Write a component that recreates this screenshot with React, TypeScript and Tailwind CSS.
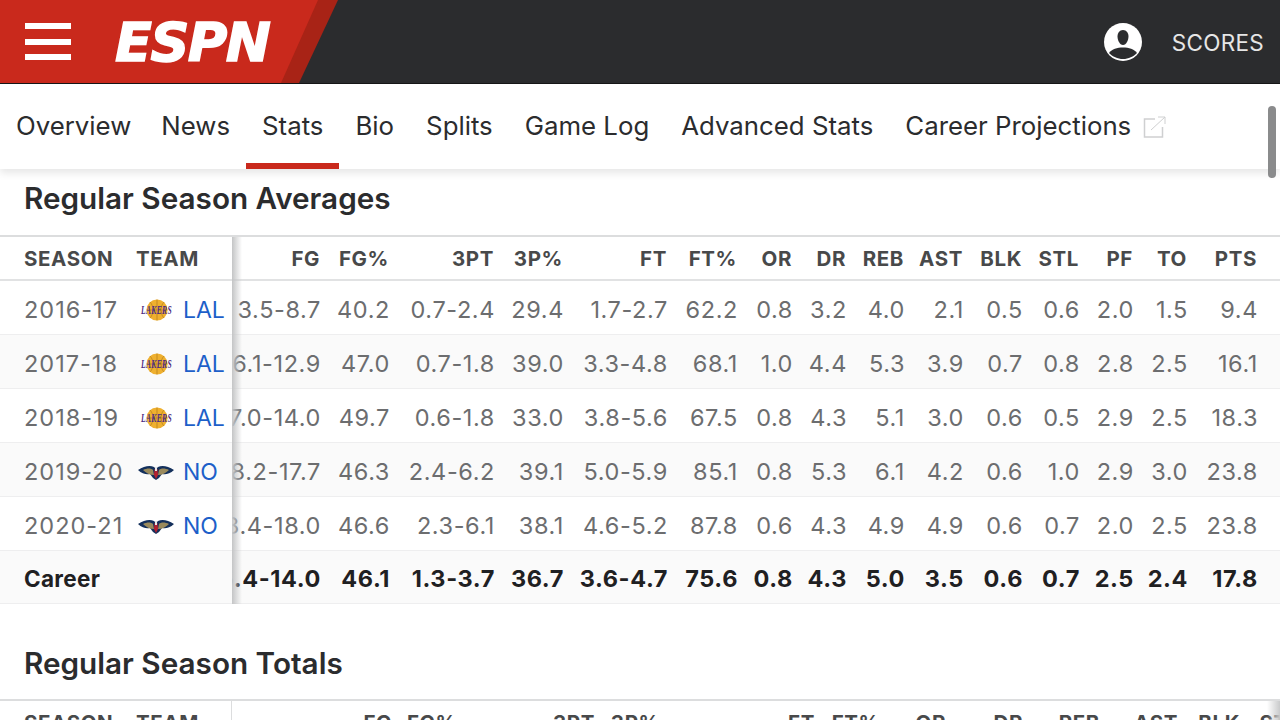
const font = "font-['Inter','Liberation_Sans',sans-serif]";

const tabs = ["Overview", "News", "Stats", "Bio", "Splits", "Game Log", "Advanced Stats", "Career Projections"];
const heads = ["FG", "FG%", "3PT", "3P%", "FT", "FT%", "OR", "DR", "REB", "AST", "BLK", "STL", "PF", "TO", "PTS"];
const widths = [118, 69, 105, 69, 104, 70, 55, 54, 58, 59, 59, 57, 54, 54, 70];
const widthsB = [190, 65, 138, 65, 155, 65, 66, 77, 77, 78, 62, 60, 54, 54, 70];

const rows = [
  { season: "2016-17", team: "LAL", v: ["3.5-8.7", "40.2", "0.7-2.4", "29.4", "1.7-2.7", "62.2", "0.8", "3.2", "4.0", "2.1", "0.5", "0.6", "2.0", "1.5", "9.4"] },
  { season: "2017-18", team: "LAL", v: ["6.1-12.9", "47.0", "0.7-1.8", "39.0", "3.3-4.8", "68.1", "1.0", "4.4", "5.3", "3.9", "0.7", "0.8", "2.8", "2.5", "16.1"] },
  { season: "2018-19", team: "LAL", v: ["7.0-14.0", "49.7", "0.6-1.8", "33.0", "3.8-5.6", "67.5", "0.8", "4.3", "5.1", "3.0", "0.6", "0.5", "2.9", "2.5", "18.3"] },
  { season: "2019-20", team: "NO", v: ["8.2-17.7", "46.3", "2.4-6.2", "39.1", "5.0-5.9", "85.1", "0.8", "5.3", "6.1", "4.2", "0.6", "1.0", "2.9", "3.0", "23.8"] },
  { season: "2020-21", team: "NO", v: ["8.4-18.0", "46.6", "2.3-6.1", "38.1", "4.6-5.2", "87.8", "0.6", "4.3", "4.9", "4.9", "0.6", "0.7", "2.0", "2.5", "23.8"] },
];
const career = ["5.4-14.0", "46.1", "1.3-3.7", "36.7", "3.6-4.7", "75.6", "0.8", "4.3", "5.0", "3.5", "0.6", "0.7", "2.5", "2.4", "17.8"];

function Lakers() {
  return (
    <svg width="34" height="24" viewBox="0 0 34 24" className="shrink-0 ml-[3px]">
      <circle cx="17" cy="12" r="10.500" fill="#efb02f" />
      <path d="M17 1.500v21M6.500 12h21M10 4c4 4 4 12 0 16M24 4c-4 4-4 12 0 16" stroke="#b27c1b" strokeWidth="0.7" fill="none" />
      <text x="1" y="16" fontFamily="Liberation Serif" fontStyle="italic" fontWeight="700" fontSize="11.500" fill="#4b2a84" textLength="31" lengthAdjust="spacingAndGlyphs">LAKERS</text>
    </svg>
  );
}

function Pelicans() {
  return (
    <svg width="36" height="16" viewBox="0 0 36 16" className="shrink-0 ml-[1px]">
      <path d="M0 6C6 2 12 1 16 3L18 5l2-2c4-2 10-1 16 3-4 4-9 5-12 4l-3 4-3 2-3-2-3-4C9 11 4 10 0 6z" fill="#14305c" />
      <path d="M5 6c4-2 8-2 10 0l1 5c-4 0-8-2-11-5zM31 6c-4-2-8-2-10 0l-1 5c4 0 8-2 11-5z" fill="#9a8a5c" />
      <path d="M16.500 5h3l.5 6-2 4-2-4z" fill="#b5202f" />
      <path d="M17 3h2v4h-2z" fill="#e8e8e8" />
    </svg>
  );
}

function Table({ rowsVisible, second }: { rowsVisible: boolean; second?: boolean }) {
  const cols = second ? widthsB : widths;
  const headText = "text-[#48494a] font-bold text-[20.5px] tracking-[0.6px] pt-[2px]";
  const bodyText = "text-[23.5px] tracking-[0.6px] pt-[5px]";
  return (
    <div className={`flex border-t-2 border-[#dcddde] ${font}`}>
      <div className={`w-[232px] shrink-0 z-10 ${second ? "border-r border-[#dcddde]" : ""}`}>
        <div className={`flex items-center h-[44px] pl-6 ${headText} border-b-2 border-[#e1e2e3]`}>
          <span className="w-[112px]">SEASON</span>
          <span>TEAM</span>
        </div>
        {rowsVisible &&
          rows.map((r, i) => (
            <div key={r.season} className={`flex items-center h-[54px] pl-6 border-b border-[#eeeeef] ${bodyText} ${i % 2 ? "bg-[#fafafa]" : "bg-white"}`}>
              <span className="w-[113px] text-[#6c6d6f] tracking-[1px]">{r.season}</span>
              <span className="flex items-center w-[46px] shrink-0">{r.team === "LAL" ? <Lakers /> : <Pelicans />}</span>
              <span className="text-[23px] tracking-normal text-[#1d5fc9]">{r.team}</span>
            </div>
          ))}
        {rowsVisible && (
          <div className="flex items-center h-[53px] pl-6 pt-[4px] bg-[#fafafa] border-b border-[#eeeeef] text-[22.5px] font-bold text-[#1f2022] tracking-[0.3px]">Career</div>
        )}
      </div>
      <div className="relative flex-1 overflow-hidden">
        {!second && <div className="absolute left-0 top-0 bottom-0 w-[10px] bg-gradient-to-r from-[#c4c5c6] to-transparent z-10" />}
        {second && <div className="absolute right-0 top-0 bottom-0 w-[13px] bg-gradient-to-l from-[#c9cacb] to-transparent z-10" />}
        <div className="-ml-[30px] w-[1200px]">
          <div className={`flex items-center h-[44px] ${headText} border-b-2 border-[#e1e2e3]`}>
            {heads.map((h, i) => (
              <span key={h} className="text-right shrink-0" style={{ width: cols[i] }}>{h}</span>
            ))}
          </div>
          {rowsVisible &&
            rows.map((r, ri) => (
              <div key={r.season} className={`flex items-center h-[54px] pl-[1px] border-b border-[#eeeeef] ${bodyText} text-[#6c6d6f] whitespace-nowrap ${ri % 2 ? "bg-[#fafafa]" : "bg-white"}`}>
                {r.v.map((c, i) => (
                  <span key={i} className="text-right shrink-0" style={{ width: cols[i] }}>{c}</span>
                ))}
              </div>
            ))}
          {rowsVisible && (
            <div className="flex items-center h-[53px] pl-[1px] bg-[#fafafa] border-b border-[#eeeeef] text-[23.5px] font-bold tracking-[0.6px] pt-[4px] text-[#1f2022] whitespace-nowrap">
              {career.map((c, i) => (
                <span key={i} className="text-right shrink-0" style={{ width: cols[i] }}>{c}</span>
              ))}
            </div>
          )}
        </div>
      </div>
    </div>
  );
}

export default function App() {
  return (
    <div className={`relative w-[1280px] h-[720px] overflow-hidden bg-white ${font}`}>
      <header className="relative flex items-center justify-between h-[84px] bg-[#2b2c2e] border-b border-[#161718]">
        <div className="relative h-full w-[338px] bg-[#a82316] [clip-path:polygon(0_0,100%_0,299px_100%,0_100%)]">
          <div className="flex items-center h-full pl-[25px] bg-[#c9291c] [clip-path:polygon(0_0,318px_0,281px_100%,0_100%)]">
            <div className="flex flex-col gap-[9.5px] w-[46px]">
              <span className="h-[6px] bg-white" />
              <span className="h-[6px] bg-white" />
              <span className="h-[6px] bg-white" />
            </div>
            <span className="ml-[44px] pt-[2px] text-white text-[54px] leading-none italic font-bold tracking-[-1.5px] font-['DejaVu_Sans',sans-serif] [-webkit-text-stroke:1.5px_white]">ESPN</span>
          </div>
        </div>
        <div className="flex items-center pr-4">
          <svg width="40" height="40" viewBox="0 0 40 40">
            <circle cx="20" cy="20" r="19" fill="#fff" />
            <path d="M20 8c3.600 0 5.500 3 5.500 6.500S23.400 23 20 23s-5.500-5-5.500-8.500S16.400 8 20 8z" fill="#2b2c2e" />
            <path d="M6 31c3-4 8-5.500 14-5.500S31 27 34 31c-3.500 3.600-8.500 6-14 6S9.500 34.600 6 31z" fill="#2b2c2e" />
          </svg>
          <span className="ml-[29px] pt-[3px] text-[22.5px] text-[#e6e6e6] tracking-[0.3px]">SCORES</span>
        </div>
      </header>

      <nav className="relative z-20 flex h-[85px] bg-white shadow-[0_4px_8px_rgba(0,0,0,0.10)]">
        {tabs.map((t) => (
          <div key={t} className={`flex items-center pl-4 h-full text-[25.8px] text-[#2b2c2e] border-b-[6px] pt-[6px] ${t === "Overview" ? "pr-[14px]" : "pr-4"} ${t === "Stats" ? "border-[#c9291c]" : "border-transparent"}`}>
            {t}
            {t === "Career Projections" && (
              <svg width="24" height="22" viewBox="0 0 24 22" fill="none" stroke="#cfd0d1" strokeWidth="1.500" className="ml-3">
                <path d="M12 3H1.500v18h18V11" />
                <path d="M8 14L22 1M15 1h7v7" strokeWidth="1" />
              </svg>
            )}
          </div>
        ))}
      </nav>
      <div className="absolute right-[4px] top-[106px] z-30 w-[8px] h-[72px] rounded-full bg-[#8a8b8c]" />

      <h2 className="h-[66px] pl-6 pb-[8px] flex items-center text-[29.7px] font-semibold text-[#2b2c2e]">Regular Season Averages</h2>
      <Table rowsVisible />
      <h2 className="h-[95px] pl-6 pt-[24px] flex items-center text-[29.7px] font-semibold text-[#2b2c2e]">Regular Season Totals</h2>
      <Table rowsVisible={false} second />
    </div>
  );
}
